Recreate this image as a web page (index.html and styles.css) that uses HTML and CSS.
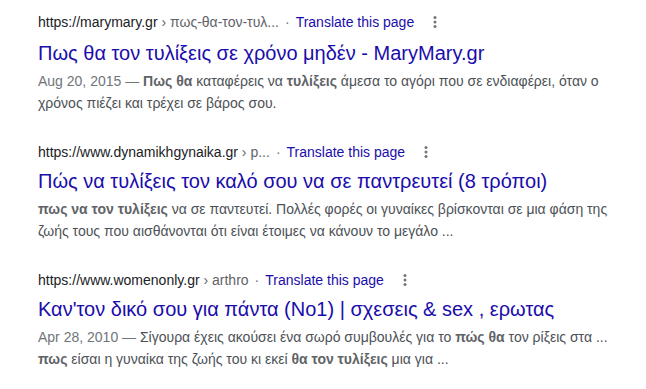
FILE: index.html
```html
<!DOCTYPE html>
<html>
<head>
<meta charset="utf-8">
<link rel="stylesheet" href="styles.css">
</head>
<body>
<div class="results">
  <div class="result">
    <div class="url-row">
      <span class="host">https://marymary.gr</span><span class="crumb">&nbsp;› πως-θα-τον-τυλ...</span>
      <span class="dot">·</span>
      <a class="translate">Translate this page</a>
      <span class="menu"><svg width="4" height="14" viewBox="0 0 4 14"><circle cx="2" cy="2.5" r="1.5"/><circle cx="2" cy="7" r="1.5"/><circle cx="2" cy="11.5" r="1.5"/></svg></span>
    </div>
    <h3 class="title">Πως θα τον τυλίξεις σε χρόνο μηδέν - MaryMary.gr</h3>
    <div class="snippet"><span class="date">Aug 20, 2015 — </span><b>Πως θα</b> καταφέρεις να <b>τυλίξεις</b> άμεσα το αγόρι που σε ενδιαφέρει, όταν ο<br>χρόνος πιέζει και τρέχει σε βάρος σου.</div>
  </div>
  <div class="result">
    <div class="url-row">
      <span class="host">https://www.dynamikhgynaika.gr</span><span class="crumb">&nbsp;› p...</span>
      <span class="dot">·</span>
      <a class="translate">Translate this page</a>
      <span class="menu"><svg width="4" height="14" viewBox="0 0 4 14"><circle cx="2" cy="2.5" r="1.5"/><circle cx="2" cy="7" r="1.5"/><circle cx="2" cy="11.5" r="1.5"/></svg></span>
    </div>
    <h3 class="title">Πώς να τυλίξεις τον καλό σου να σε παντρευτεί (8 τρόποι)</h3>
    <div class="snippet"><b>πως να τον τυλίξεις</b> να σε παντευτεί. Πολλές φορές οι γυναίκες βρίσκονται σε μια φάση της<br>ζωής τους που αισθάνονται ότι είναι έτοιμες να κάνουν το μεγάλο ...</div>
  </div>
  <div class="result">
    <div class="url-row">
      <span class="host">https://www.womenonly.gr</span><span class="crumb">&nbsp;› arthro</span>
      <span class="dot">·</span>
      <a class="translate">Translate this page</a>
      <span class="menu"><svg width="4" height="14" viewBox="0 0 4 14"><circle cx="2" cy="2.5" r="1.5"/><circle cx="2" cy="7" r="1.5"/><circle cx="2" cy="11.5" r="1.5"/></svg></span>
    </div>
    <h3 class="title">Καν'τον δικό σου για πάντα (No1) | σχεσεις &amp; sex , ερωτας</h3>
    <div class="snippet"><span class="date">Apr 28, 2010 — </span>Σίγουρα έχεις ακούσει ένα σωρό συμβουλές για το <b>πώς θα</b> τον ρίξεις στα ...<br><b>πως</b> είσαι η γυναίκα της ζωής του κι εκεί <b>θα τον τυλίξεις</b> μια για ...</div>
  </div>
</div>
</body>
</html>
```

FILE: styles.css
```css
html, body {
  margin: 0;
  padding: 0;
  background: #fff;
}
body {
  font-family: "Liberation Sans", Arial, sans-serif;
  color: #4d5156;
}
.results {
  padding: 13px 0 0 38px;
  display: flex;
  flex-direction: column;
  gap: 29px;
}
.result {
  display: flex;
  flex-direction: column;
}
.url-row {
  font-size: 14px;
  line-height: 18px;
  height: 18px;
  display: flex;
  align-items: center;
  white-space: nowrap;
}
.host {
  color: #202124;
}
.crumb {
  color: #5f6368;
}
.dot {
  color: #70757a;
  margin: 0 6px 0 6px;
}
.translate {
  color: #1a0dab;
}
.menu {
  display: inline-flex;
  margin-left: 19px;
  fill: #70757a;
}
.title {
  margin: 7px 0 0;
  font-size: 20px;
  line-height: 26px;
  font-weight: normal;
  color: #1a0dab;
  white-space: nowrap;
}
.result:first-child .title {
  margin-top: 9px;
}
.snippet {
  margin-top: 4px;
  font-size: 14px;
  line-height: 22px;
  color: #4d5156;
  white-space: nowrap;
}
.snippet b {
  color: #5f6368;
  font-weight: bold;
}
.date {
  color: #70757a;
}
```
